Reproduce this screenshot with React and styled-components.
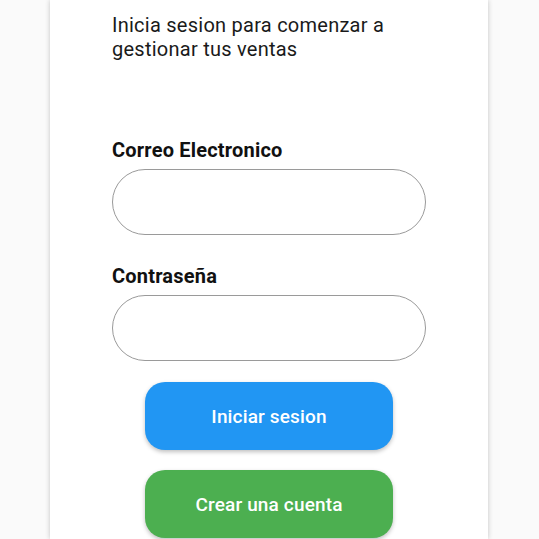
import React from 'react';
import styled, { createGlobalStyle } from 'styled-components';

const Global = createGlobalStyle`
  html, body {
    margin: 0;
    padding: 0;
    background: #fafafa;
    font-family: Roboto, "Liberation Sans", sans-serif;
  }
  * { box-sizing: border-box; }
`;

const Page = styled.div`
  display: flex;
  justify-content: flex-start;
  padding-left: 50px;
  height: 539px;
  overflow: hidden;
`;

const Card = styled.div`
  width: 438px;
  background: #fff;
  box-shadow: 0 0 5px rgba(0, 0, 0, 0.22);
  padding: 13px 62px 0;
  display: flex;
  flex-direction: column;
`;

const Intro = styled.p`
  margin: 0 0 79px;
  font-size: 20px;
  line-height: 24px;
  letter-spacing: 0.25px;
  color: #1a1a1a;
`;

const Label = styled.label`
  display: block;
  font-size: 20px;
  font-weight: 700;
  line-height: 21px;
  letter-spacing: 0.2px;
  color: #111;
  margin: ${p => (p.first ? '0' : '31px')} 0 8px;
`;

const Input = styled.input`
  display: block;
  width: 100%;
  height: 66px;
  border: 1.3px solid #9a9a9a;
  border-radius: 33px;
  background: #fff;
  padding: 0 24px;
  font-size: 18px;
  font-family: inherit;
  outline: none;
`;

const Actions = styled.div`
  display: flex;
  flex-direction: column;
  align-items: center;
  gap: 20px;
  margin-top: 21px;
`;

const Button = styled.button`
  width: 248px;
  height: 68px;
  flex-shrink: 0;
  border: none;
  border-radius: 20px;
  background: ${p => p.color};
  color: #fff;
  font-family: inherit;
  font-size: 19px;
  font-weight: 500;
  letter-spacing: 0.15px;
  box-shadow: 0 2px 4px rgba(0, 0, 0, 0.25);
  cursor: pointer;
`;

export default function App() {
  return (
    <>
      <Global />
      <Page>
        <Card>
          <Intro>Inicia sesion para comenzar a gestionar tus ventas</Intro>
          <Label first htmlFor="email">Correo Electronico</Label>
          <Input id="email" type="email" />
          <Label htmlFor="pass">Contraseña</Label>
          <Input id="pass" type="password" />
          <Actions>
            <Button color="#2196f3">Iniciar sesion</Button>
            <Button color="#4caf50">Crear una cuenta</Button>
          </Actions>
        </Card>
      </Page>
    </>
  );
}
